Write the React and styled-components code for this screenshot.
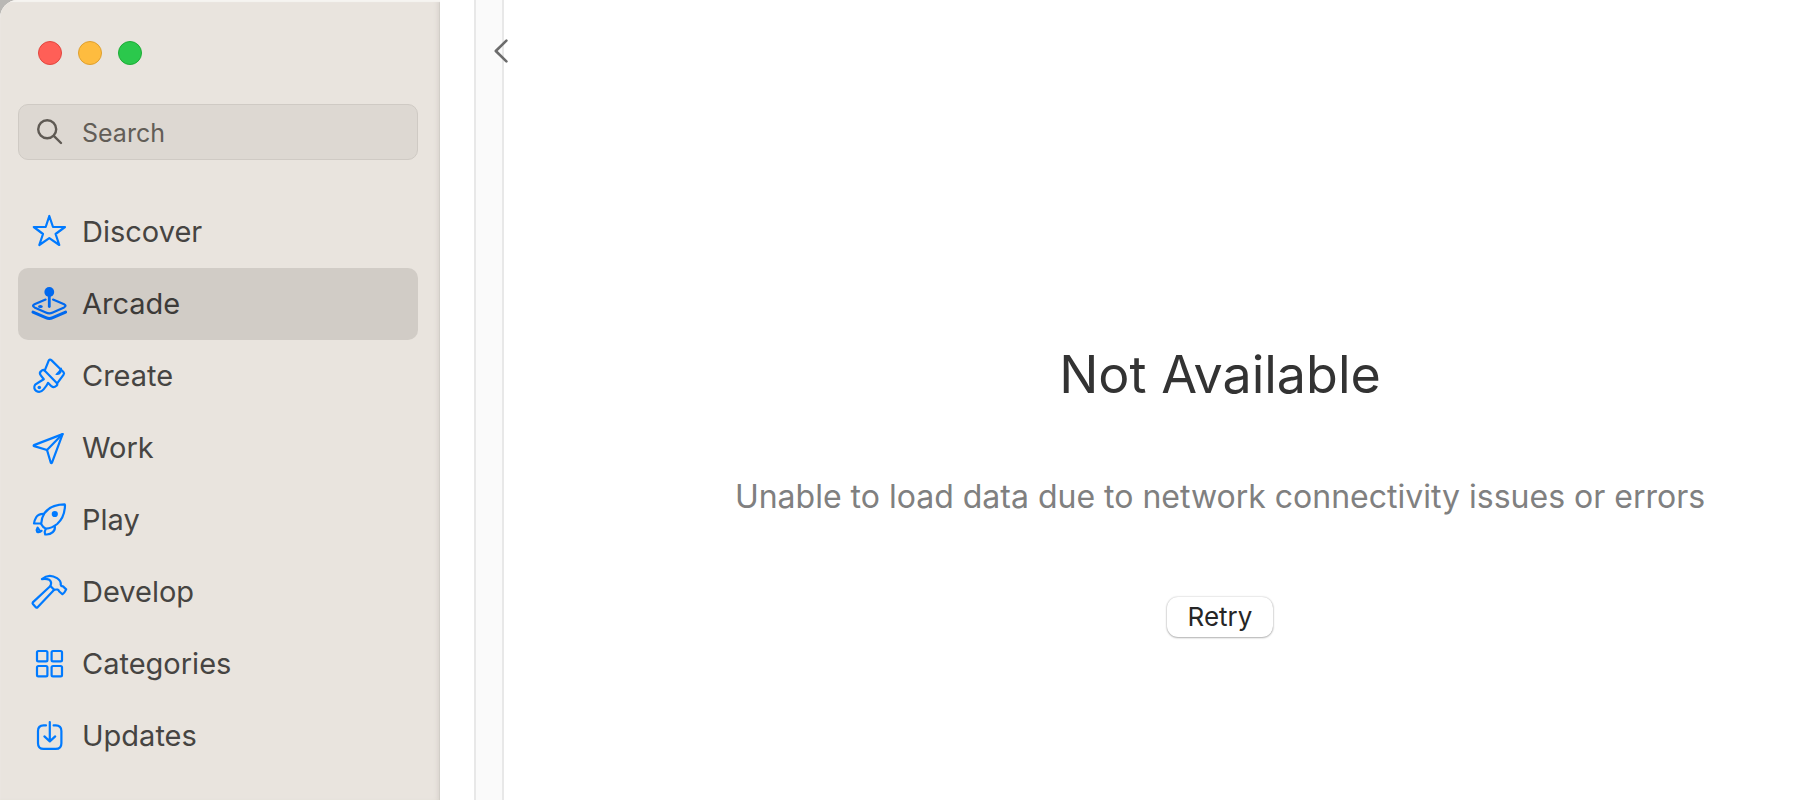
import React, { useState } from 'react';
import styled, { createGlobalStyle } from 'styled-components';

const GlobalStyle = createGlobalStyle`
  * {
    box-sizing: border-box;
  }
  body {
    margin: 0;
    background: #b9b7b4;
    font-family: Inter, "Liberation Sans", sans-serif;
  }
`

const StarIcon = () => (
  <Icon viewBox="0 0 36 36">
    <path d="M18.3 2 22 13H34L24.6 20 28.3 31 18.3 24.2 8.3 31 12 20 2.8 13H14.7Z" />
  </Icon>
)

const ArcadeIcon = () => (
  <Icon viewBox="0 0 36 36">
    <circle className="solid" cx="18.3" cy="6" r="4.9" />
    <path strokeWidth="2.8" d="M18.3 9V20.5" />
    <path d="M14.6 13.6 3.5 18.2Q.5 19.8 3.5 21.4L14.8 26.6Q18.3 28.2 21.8 26.6L33.1 21.4Q36 19.8 33.1 18.2L22 13.6" />
    <ellipse className="solid" cx="9.4" cy="20.4" rx="2.4" ry="1.5" />
    <path strokeWidth="3" d="M2 26.1 14.8 31.6Q18.3 33.2 21.8 31.6L34.6 26.1" />
  </Icon>
)

const BrushIcon = () => (
  <Icon viewBox="0 0 36 36">
    <path d="M13.7 12.6 17.6 2.8Q18.7 .7 20.6 2.4L32.4 14Q33.6 15.3 32.6 16.6L26 25.6" />
    <path d="M12.8 11.8 26 25.3Q26.8 26.6 25.4 27.8 22.8 30.2 20.4 28.2L17 24.8Q16 27.4 12.6 31.4C8 36.8 .6 31.8 4.2 26.7Q8 24 12.8 21.2L9.8 17.4Q8 15.2 9.8 13.4 11.4 11.6 12.8 11.8Z" />
    <path className="solid" d="M31 9.8 30.3 14.7Q27.6 18.4 24.2 16.4 27.8 13.6 29.6 9.8Z" />
    <circle className="solid" cx="8.3" cy="29.5" r="1.8" />
  </Icon>
)

const PlaneIcon = () => (
  <Icon viewBox="0 0 36 36">
    <path d="M31.6 4.1 3 15.1Q2.2 15.8 3.2 16.1L16 20 19.8 32.7Q20.4 33.8 21 32.6Z" />
    <path d="M16 20 31.6 4.1" />
  </Icon>
)

const RocketIcon = () => (
  <Icon viewBox="0 0 36 36">
    <path d="M33.6 2.4Q20 2.4 13.6 11 10 16.6 10.3 22.2 12 25.6 15 26.7 20.6 26.4 26.2 22 33.6 15.4 34 3.4 34 2.4 33.6 2.4Z" />
    <circle className="solid" cx="23.8" cy="12" r="3.1" />
    <path d="M13 11.8Q7.4 11.6 5.2 15.2 3 19 3 21.5H10" />
    <path d="M14.6 27.2Q13 30 14.2 32.4 18.6 33 21.8 30.2 24.4 28 23.8 24.2" />
    <path d="M6.6 25.6Q5 28 6.2 30 8.8 30.8 10.6 28.8M6.8 26 8.8 28.8" />
  </Icon>
)

const HammerIcon = () => (
  <Icon viewBox="0 0 36 36">
    <path d="M10.9 5.1Q18 -1 26 4.2Q30.3 7 29.7 10.8Q30 12.4 32 12.4L35.2 15.4Q33.6 19 31.4 20.2L28 17.2Q27.8 14.8 23.2 15.8L19.4 12Q21.2 8 18.4 5.8 15 4.2 10.9 5.1Z" />
    <path d="M19.4 12 1.8 28.4Q1.2 29.2 1.9 30L5 33.4Q5.8 34 6.6 33.3L23.2 15.8" />
  </Icon>
)

const GridIcon = () => (
  <Icon viewBox="0 0 36 36">
    <rect x="6" y="5" width="10.4" height="10.4" rx="1.4" />
    <rect x="20.6" y="5" width="10.4" height="10.4" rx="1.4" />
    <rect x="6" y="20" width="10.4" height="10.4" rx="1.4" />
    <rect x="20.6" y="20" width="10.4" height="10.4" rx="1.4" />
  </Icon>
)

const UpdatesIcon = () => (
  <Icon viewBox="0 0 36 36">
    <path d="M15 7.4H12.6Q7 7.4 7 13V25.2Q7 30.9 12.6 30.9H24.8Q30.4 30.9 30.4 25.2V13Q30.4 7.4 24.8 7.4H22.6" />
    <path d="M18.8 4V23M13.4 18.4 18.8 23.4 24.2 18.4" />
  </Icon>
)

const links = [
  { name: 'Discover', icon: StarIcon },
  { name: 'Arcade', icon: ArcadeIcon },
  { name: 'Create', icon: BrushIcon },
  { name: 'Work', icon: PlaneIcon },
  { name: 'Play', icon: RocketIcon },
  { name: 'Develop', icon: HammerIcon },
  { name: 'Categories', icon: GridIcon },
  { name: 'Updates', icon: UpdatesIcon },
]

const App = () => {

  const [active, setActive] = useState('Arcade');

  return (
    <Window>
      <GlobalStyle />
      <Sidebar>
        <Lights>
          <Light $fill="#ff5f57" $edge="#e2463f" aria-label="Close" />
          <Light $fill="#febc3f" $edge="#dfa02f" aria-label="Minimize" />
          <Light $fill="#2bc84c" $edge="#1dac36" aria-label="Zoom" />
        </Lights>
        <Search>
          <svg viewBox="0 0 26 26" aria-hidden="true">
            <circle cx="10.2" cy="10.2" r="9" />
            <path d="M16.8 16.8 24 24" />
          </svg>
          <input type="text" placeholder="Search" aria-label="Search" />
        </Search>
        <Nav>
          {links.map(({ name, icon: LinkIcon }) => (
            <NavLink key={name} href={`#${name}`} $active={name === active} onClick={() => setActive(name)}>
              <LinkIcon />
              {name}
            </NavLink>
          ))}
        </Nav>
      </Sidebar>
      <Gutter>
        <Back aria-label="Back">
          <svg viewBox="0 0 14 24" aria-hidden="true">
            <path d="M12.4 1.6 1.8 12 12.4 22.4" />
          </svg>
        </Back>
      </Gutter>
      <Content>
        <h1>Not Available</h1>
        <p>Unable to load data due to network connectivity issues or errors</p>
        <Retry>Retry</Retry>
      </Content>
    </Window>
  )
}

const Window = styled.div`
  display: flex;
  min-height: 100vh;
  background: #ffffff;
  border-top-left-radius: 18px;
  overflow: hidden;
`
const Sidebar = styled.aside`
  flex: none;
  width: 440px;
  padding: 40px 22px 28px 18px;
  background: #e9e4de;
  box-shadow: inset 0 2px 1px #f6f4f1, inset -1px 0 0 #cfcac4, inset -5px 0 5px -3px #d6d1cb;
`
const Lights = styled.div`
  display: flex;
  gap: 16px;
  padding: 1px 20px 0;
`
const Light = styled.button`
  width: 24px;
  height: 24px;
  padding: 0;
  border: 1px solid ${props => props.$edge};
  border-radius: 50%;
  background: ${props => props.$fill};
`
const Search = styled.div`
  display: flex;
  align-items: center;
  gap: 19px;
  height: 56px;
  margin: 39px 0 36px;
  padding: 0 18px;
  border: 1px solid #cfcac4;
  border-radius: 10px;
  background: #ddd8d2;
  svg {
    flex: none;
    width: 26px;
    height: 26px;
    fill: none;
    stroke: #5f5a54;
    stroke-width: 2.4;
    stroke-linecap: round;
  }
  input {
    flex: 1;
    min-width: 0;
    padding: 2px 0 0;
    border: 0;
    outline: 0;
    background: none;
    color: #45423f;
    font: 400 25px/32px Inter, "Liberation Sans", sans-serif;
  }
  input::placeholder {
    color: #625d57;
    opacity: 1;
  }
`
const Nav = styled.nav`
  display: flex;
  flex-direction: column;
`
const NavLink = styled.a`
  display: flex;
  align-items: center;
  gap: 15px;
  height: 72px;
  padding: 0 13px;
  border-radius: 10px;
  background: ${props => props.$active ? '#d1ccc6' : 'none'};
  color: ${props => props.$active ? '#3d3b39' : '#464442'};
  --tint: ${props => props.$active ? '#0068ee' : '#007aff'};
  font-size: 29px;
  line-height: 36px;
  text-decoration: none;
`
const Icon = styled.svg`
  flex: none;
  width: 36px;
  height: 36px;
  fill: none;
  stroke: var(--tint);
  stroke-width: 2.2;
  stroke-linecap: round;
  stroke-linejoin: round;
  overflow: visible;
  .solid {
    fill: var(--tint);
    stroke: none;
  }
`
const Gutter = styled.div`
  flex: none;
  width: 30px;
  margin-left: 34px;
  padding-top: 38px;
  border: solid #e8e8e8;
  border-width: 0 2px;
  background: #fafafa;
`
const Back = styled.button`
  display: block;
  width: 14px;
  height: 26px;
  margin-left: 18px;
  padding: 0;
  border: 0;
  background: none;
  svg {
    display: block;
    width: 14px;
    height: 24px;
    fill: none;
    stroke: #6c6c6c;
    stroke-width: 2.6;
    stroke-linecap: round;
    stroke-linejoin: round;
  }
`
const Content = styled.main`
  flex: 1;
  display: flex;
  flex-direction: column;
  align-items: center;
  justify-content: center;
  padding: 192px 0 12px 140px;
  h1 {
    margin: 0;
    color: #333333;
    font-size: 52px;
    font-weight: 400;
    line-height: 64px;
  }
  p {
    margin: 70px 0 80px;
    color: #808080;
    font-size: 32px;
    line-height: 40px;
    text-align: center;
  }
`
const Retry = styled.button`
  height: 40px;
  padding: 0 21px;
  border: 0;
  border-radius: 11px;
  background: #ffffff;
  box-shadow: 0 0 2px rgba(0, 0, 0, 0.25), 0 1px 2px rgba(0, 0, 0, 0.25);
  color: #262626;
  font: 400 26px/40px Inter, "Liberation Sans", sans-serif;
`
export default App
